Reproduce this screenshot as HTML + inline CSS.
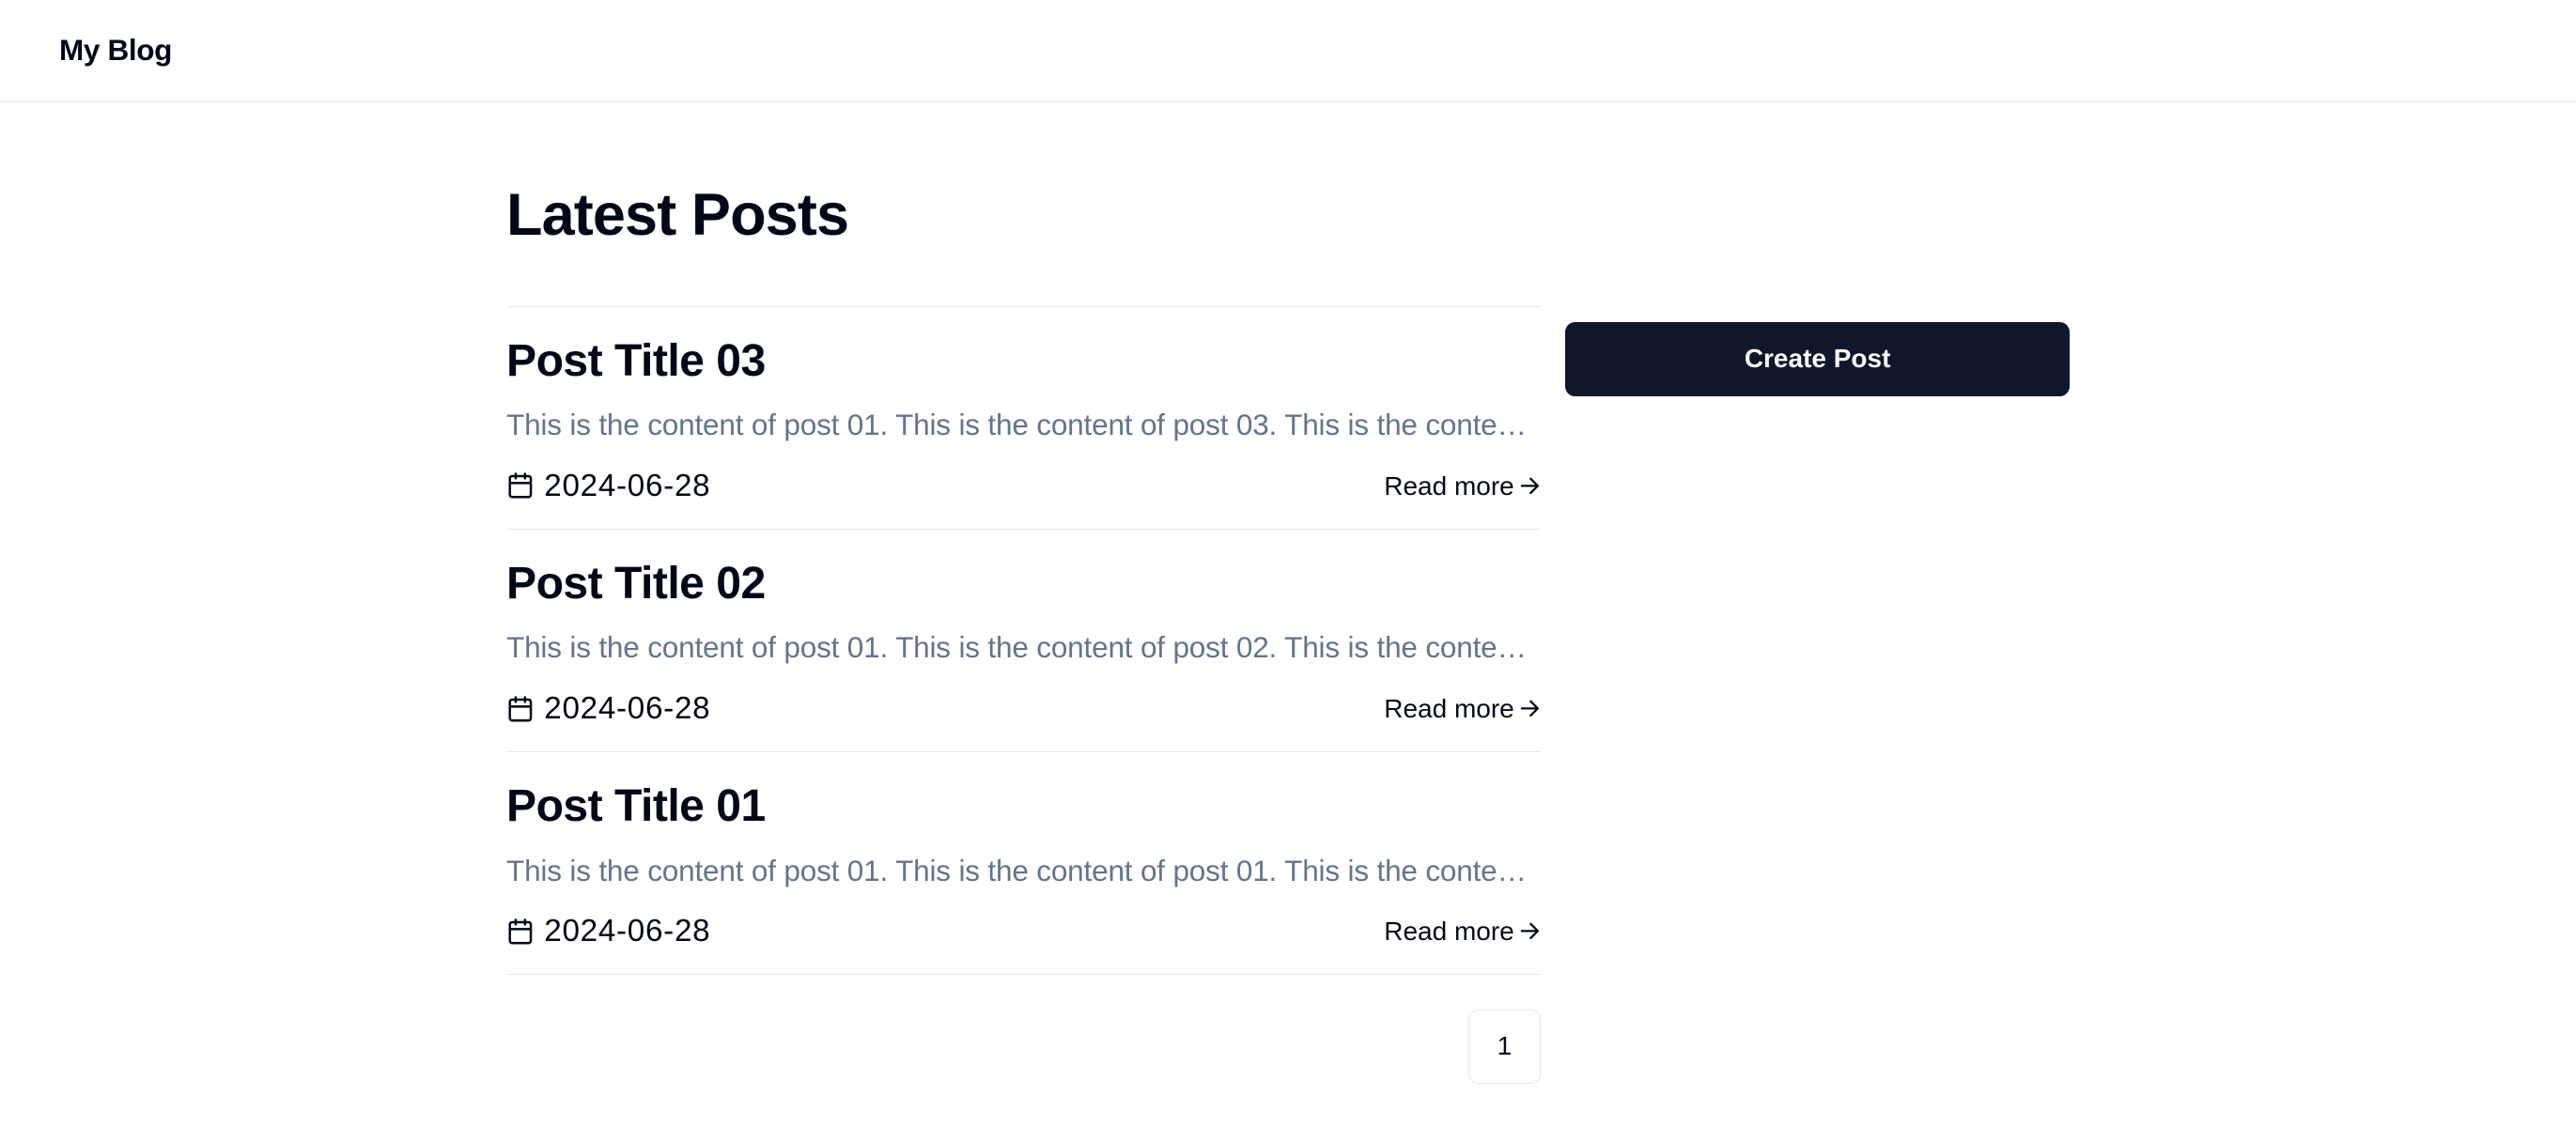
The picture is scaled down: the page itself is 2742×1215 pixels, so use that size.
<!DOCTYPE html>
<html><head><meta charset="utf-8"><style>
html,body{margin:0;padding:0;background:#fff}
body{zoom:1.75;font-family:"Liberation Sans",sans-serif;color:#020817;width:1567px;height:694px;overflow:hidden}
.hdr{height:62px;border-bottom:1px solid #e2e8f0;box-sizing:border-box;position:relative}
.hdr span{position:absolute;left:36px;top:20px;font-size:18px;font-weight:700;letter-spacing:-0.2px}
.wrap{position:absolute;left:308px;top:0;width:951px}
h1{position:absolute;top:110px;left:0;margin:0;font-size:36px;font-weight:800;letter-spacing:-0.5px;white-space:nowrap}
.list{position:absolute;left:0;top:186px;width:629px;border-top:1px solid #e2e8f0}
.post{height:135px;border-bottom:1px solid #e2e8f0;box-sizing:content-box;position:relative}
.t{position:absolute;top:15px;font-size:27.5px;font-weight:700;line-height:36px;letter-spacing:-0.3px}
.c{position:absolute;top:58px;width:626px;font-size:18px;line-height:28px;color:#64748b;white-space:nowrap;overflow:hidden;text-overflow:ellipsis;letter-spacing:-0.1px}
.d{position:absolute;top:95px;left:0;font-size:19px;line-height:28px;display:flex;align-items:center;gap:6px;letter-spacing:0.4px}
.r{position:absolute;top:95px;right:0;font-size:16px;line-height:28px}
.r svg{vertical-align:-1px;margin-left:3px}
.btn{position:absolute;left:644px;top:196px;width:307px;height:45px;background:#0f172a;color:#fff;border-radius:6px;font-size:16px;font-weight:600;display:flex;align-items:center;justify-content:center}
.pg{position:absolute;left:585px;top:614px;width:43px;height:44px;border:1px solid #e2e8f0;border-radius:6px;display:flex;align-items:center;justify-content:center;font-size:16px}
</style></head><body>
<div class="hdr"><span>My Blog</span></div>
<div class="wrap">
<h1>Latest Posts</h1>
<div class="list">
<div class="post"><div class="t">Post Title 03</div><div class="c">This is the content of post 01. This is the content of post 03. This is the content of post 03.</div><div class="d"><svg width="17" height="17" viewBox="0 0 24 24" fill="none" stroke="#020817" stroke-width="2" stroke-linecap="round"><rect x="3" y="4" width="18" height="18" rx="2"/><path d="M16 2v4M8 2v4M3 10h18"/></svg>2024-06-28</div><div class="r">Read more<svg width="13" height="13" viewBox="0 0 24 24" fill="none" stroke="#020817" stroke-width="2.4" stroke-linecap="round" stroke-linejoin="round"><path d="M3 12h18M13 4l8 8-8 8"/></svg></div></div>
<div class="post"><div class="t">Post Title 02</div><div class="c">This is the content of post 01. This is the content of post 02. This is the content of post 02.</div><div class="d"><svg width="17" height="17" viewBox="0 0 24 24" fill="none" stroke="#020817" stroke-width="2" stroke-linecap="round"><rect x="3" y="4" width="18" height="18" rx="2"/><path d="M16 2v4M8 2v4M3 10h18"/></svg>2024-06-28</div><div class="r">Read more<svg width="13" height="13" viewBox="0 0 24 24" fill="none" stroke="#020817" stroke-width="2.4" stroke-linecap="round" stroke-linejoin="round"><path d="M3 12h18M13 4l8 8-8 8"/></svg></div></div>
<div class="post"><div class="t">Post Title 01</div><div class="c">This is the content of post 01. This is the content of post 01. This is the content of post 01.</div><div class="d"><svg width="17" height="17" viewBox="0 0 24 24" fill="none" stroke="#020817" stroke-width="2" stroke-linecap="round"><rect x="3" y="4" width="18" height="18" rx="2"/><path d="M16 2v4M8 2v4M3 10h18"/></svg>2024-06-28</div><div class="r">Read more<svg width="13" height="13" viewBox="0 0 24 24" fill="none" stroke="#020817" stroke-width="2.4" stroke-linecap="round" stroke-linejoin="round"><path d="M3 12h18M13 4l8 8-8 8"/></svg></div></div>
</div>
<div class="btn">Create Post</div>
<div class="pg">1</div>
</div>
</body></html>
